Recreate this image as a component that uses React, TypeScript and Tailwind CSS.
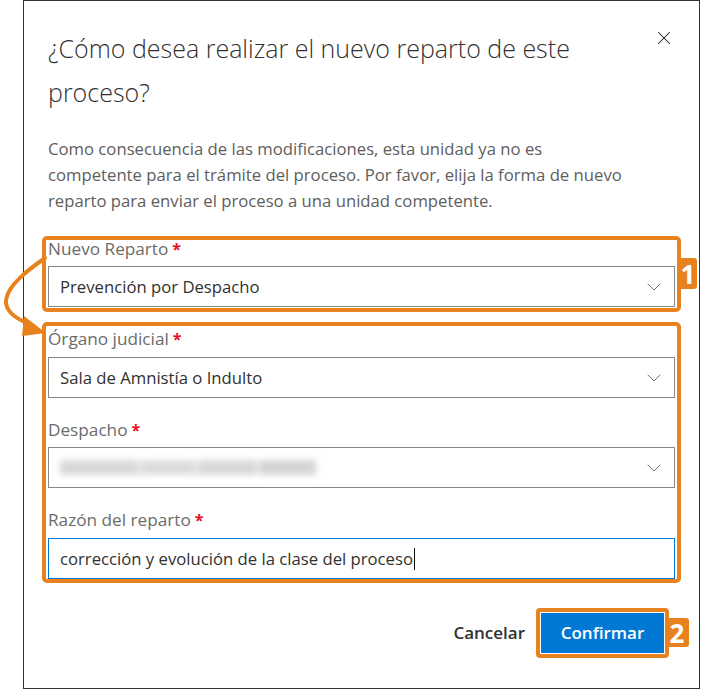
import { ChevronDown, X } from "lucide-react";

const orangeBox = "relative -mx-[6px] rounded-[5px] border-[4px] border-[#e8821e] px-[2px]";
const labelStyle = "flex h-[18px] items-center text-[17.2px] leading-[18px] text-[#6b6b6b]";
const inputStyle =
  "flex h-[41px] w-full items-center justify-between border border-[#8a8886] bg-white pl-[11px] pr-[8px] text-[16.7px] text-[#323130]";

const Label = ({ text }: { text: string }) => (
  <div className={labelStyle}>
    <span>{text}</span>
    <span className="ml-[4px] text-[16px] font-bold text-[#e81123]">*</span>
  </div>
);

const Select = ({ value, blurred }: { value?: string; blurred?: boolean }) => (
  <div className={inputStyle}>
    {blurred ? (
      <div className="flex items-center gap-[4px] bg-[#ececec] blur-[3px]">
        <div className="h-[15px] w-[78px] bg-[#d8d8d8]" />
        <div className="h-[15px] w-[52px] bg-[#dcdcdc]" />
        <div className="h-[15px] w-[58px] bg-[#d8d8d8]" />
        <div className="h-[15px] w-[56px] bg-[#d4d4d4]" />
      </div>
    ) : (
      <span>{value}</span>
    )}
    <ChevronDown size={24} strokeWidth={0.9} className="text-[#666]" />
  </div>
);

export default function App() {
  return (
    <div className="relative h-[689px] w-[705px] overflow-hidden bg-white font-['Open_Sans',sans-serif]">
      <div className="ml-[23px] h-[689px] w-[677px] border border-[#333] px-[24px] pt-[25px]">
        <div className="relative">
          <h1 className="w-[560px] text-[25px] font-light leading-[44px] text-[#323130]">
            ¿Cómo desea realizar el nuevo reparto de este proceso?
          </h1>
          <button className="absolute right-[0px] top-[1px] text-[#222]">
            <X size={22} strokeWidth={1.1} />
          </button>
        </div>

        <p className="mt-[22px] text-[16.7px] leading-[26px] text-[#605e5c]">
          Como consecuencia de las modificaciones, esta unidad ya no es
          <br />
          competente para el trámite del proceso. Por favor, elija la forma de nuevo
          <br />
          reparto para enviar el proceso a una unidad competente.
        </p>

        <div className={`${orangeBox} mt-[22px] pb-[1px]`}>
          <Label text="Nuevo Reparto" />
          <div className="mt-[8px]">
            <Select value="Prevención por Despacho" />
          </div>
          <div className="absolute left-full top-[18px] ml-[2px] flex h-[31px] w-[18px] items-center justify-center rounded-r-[3px] bg-[#e8821e] text-[26px] font-bold leading-none text-white">
            1
          </div>
        </div>

        <div className={`${orangeBox} mt-[10px] pt-[4px]`}>
          <Label text="Órgano judicial" />
          <div className="mt-[9px]">
            <Select value="Sala de Amnistía o Indulto" />
          </div>
          <div className="mt-[23px]">
            <Label text="Despacho" />
          </div>
          <div className="mt-[8px]">
            <Select blurred />
          </div>
          <div className="mt-[23px]">
            <Label text="Razón del reparto" />
          </div>
          <div className="mt-[9px]">
            <div className="flex h-[41px] w-full items-center border border-[#0078d4] bg-white pl-[11px] text-[16.7px] text-[#323130]">
              <span>corrección y evolución de la clase del proceso</span>
              <span className="ml-[1px] h-[22px] w-[1px] bg-[#111]" />
            </div>
          </div>
        </div>

        <div className="mr-[6px] mt-[25px] flex items-center justify-end">
          <button className="mr-[11px] text-[17px] font-semibold text-[#323130]">Cancelar</button>
          <div className="relative rounded-[4px] border-[4px] border-[#e8821e] p-[1px]">
            <button className="h-[40px] w-[123px] bg-[#0078d4] text-[17px] font-semibold text-white">
              Confirmar
            </button>
            <div className="absolute left-full top-[6px] flex h-[29px] w-[24px] items-center justify-center rounded-r-[3px] bg-[#e8821e] text-[26px] font-bold leading-none text-white">
              2
            </div>
          </div>
        </div>
      </div>

      <svg className="absolute left-0 top-[250px]" width="60" height="95" viewBox="0 250 60 95">
        <path
          d="M45 258 C 28 270, 8 285, 6 300 C 5 312, 18 320, 32 325"
          fill="none"
          stroke="#e8821e"
          strokeWidth="4"
          strokeLinecap="round"
        />
        <polygon points="24,316 46,333 22,336" fill="#e8821e" />
      </svg>
    </div>
  );
}
